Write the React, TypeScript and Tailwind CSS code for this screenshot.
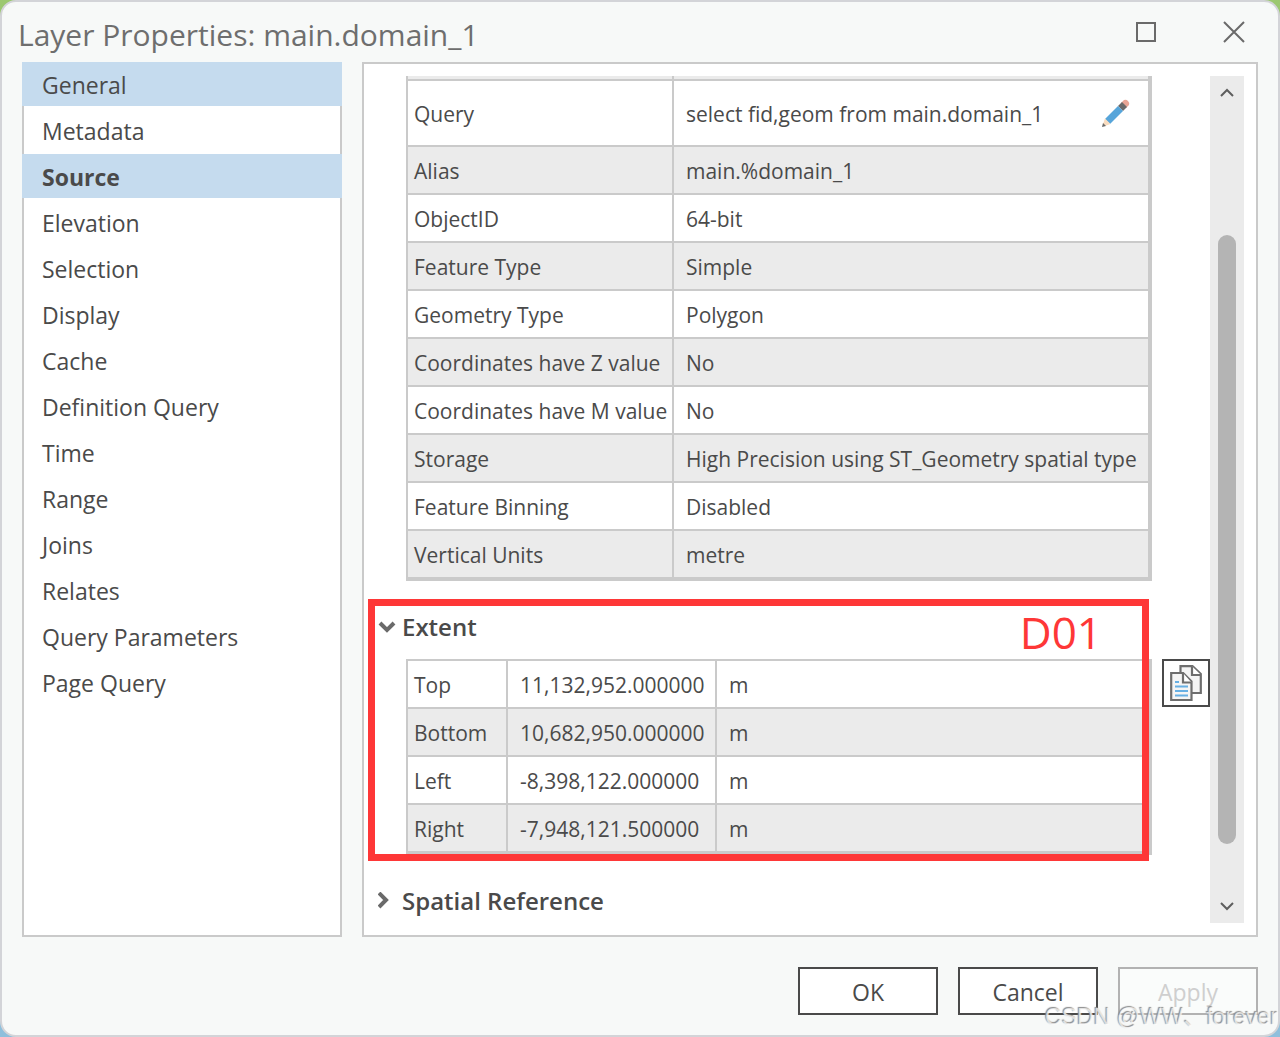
import { useState } from 'react';
import clsx from 'clsx';

const NAV_ITEMS = [
  'General',
  'Metadata',
  'Source',
  'Elevation',
  'Selection',
  'Display',
  'Cache',
  'Definition Query',
  'Time',
  'Range',
  'Joins',
  'Relates',
  'Query Parameters',
  'Page Query',
];

const SOURCE_ROWS = [
  { label: 'Alias', value: 'main.%domain_1' },
  { label: 'ObjectID', value: '64-bit' },
  { label: 'Feature Type', value: 'Simple' },
  { label: 'Geometry Type', value: 'Polygon' },
  { label: 'Coordinates have Z value', value: 'No' },
  { label: 'Coordinates have M value', value: 'No' },
  { label: 'Storage', value: 'High Precision using ST_Geometry spatial type' },
  { label: 'Feature Binning', value: 'Disabled' },
  { label: 'Vertical Units', value: 'metre' },
];

const EXTENT_ROWS = [
  { label: 'Top', value: '11,132,952.000000', unit: 'm' },
  { label: 'Bottom', value: '10,682,950.000000', unit: 'm' },
  { label: 'Left', value: '-8,398,122.000000', unit: 'm' },
  { label: 'Right', value: '-7,948,121.500000', unit: 'm' },
];

function PencilIcon() {
  return (
    <svg width="30" height="30" viewBox="0 0 30 30" aria-hidden="true">
      <path d="M21 4l3-3q2-1 4 1t1 4l-3 3z" fill="#e8a595" />
      <path d="M18 7l4-4 5 5-4 4z" fill="#6a6a6a" />
      <path d="M5 20L18 7l5 5L10 25z" fill="#57a5da" />
      <path d="M5 19.500l5.500 5.500-5.500 2-2-2z" fill="#f8dcc0" />
      <path d="M3 24l3 3-4 1z" fill="#6a6a6a" />
    </svg>
  );
}

function CopyIcon() {
  return (
    <svg width="32" height="36" viewBox="0 0 32 36" aria-hidden="true">
      <path d="M10.500 1.200h12L30.800 9v19H10.500z" fill="#f5f5f5" stroke="#6e6e6e" strokeWidth="2.200" />
      <path d="M22 1.200V10h9" fill="#fff" stroke="#6e6e6e" strokeWidth="2.200" />
      <path d="M1.200 8h12l8.300 8.500V35H1.200z" fill="#f5f5f5" stroke="#6e6e6e" strokeWidth="2.200" />
      <path d="M13 8v9.500h8.500" fill="#fff" stroke="#6e6e6e" strokeWidth="2.200" />
      <path d="M5 17h4M5 21.500h13M5 26h13M5 30.500h13" stroke="#67b0e4" strokeWidth="2.200" />
    </svg>
  );
}

function ChevronIcon({ open }: { open: boolean }) {
  return (
    <svg width="18" height="18" viewBox="0 0 18 18" fill="none" stroke="#6a6a6a" strokeWidth="4" aria-hidden="true">
      <path d={open ? 'M2 5l7 7 7-7' : 'M1 1l7 7-7 7'} />
    </svg>
  );
}

export default function App() {
  const [active, setActive] = useState('Source');
  const [extentOpen, setExtentOpen] = useState(true);
  const [referenceOpen, setReferenceOpen] = useState(false);

  return (
    <div className="relative flex min-h-screen bg-linear-to-b from-[#9cc870] to-[#8fbfdc] font-['Open_Sans','Noto_Sans',sans-serif] text-[#4a4a4a]">
      <div className="flex flex-1 flex-col rounded-2xl border-2 border-[#d3d4d8] bg-[#f7f9f8] px-5 pb-5">
        {/* Title bar */}
        <header className="flex h-15 items-start justify-between">
          <h1 className="-ml-1 pt-3 text-[30px] leading-[42px] text-[#6e6e6e]">Layer Properties: main.domain_1</h1>
          <div className="flex gap-16 pt-[18px] pr-3">
            <button aria-label="Maximize" className="size-6">
              <svg width="24" height="24" viewBox="0 0 24 24" fill="none" stroke="#6a6a6a" strokeWidth="2" aria-hidden="true">
                <path d="M3 3h18v18H3z" />
              </svg>
            </button>
            <button aria-label="Close" className="size-6">
              <svg width="24" height="24" viewBox="0 0 24 24" fill="none" stroke="#6a6a6a" strokeWidth="2" aria-hidden="true">
                <path d="M2 2l20 20M22 2L2 22" />
              </svg>
            </button>
          </div>
        </header>

        <div className="flex flex-1 gap-5">
          {/* Category list */}
          <nav className="w-80 shrink-0 border-2 border-[#cacaca] bg-white">
            <ul className="-mx-0.5 -mt-0.5">
              {NAV_ITEMS.map((item, idx) => (
                <li key={item} className="mb-0.5">
                  <button
                    onClick={() => setActive(item)}
                    className={clsx(
                      'block h-11 w-full px-5 pt-0.5 text-left text-[23px] leading-[42px]',
                      (item === active || idx === 0) && 'bg-[#c5dbee]',
                      item === active && 'font-bold'
                    )}
                  >
                    {item}
                  </button>
                </li>
              ))}
            </ul>
          </nav>

          {/* Details */}
          <main className="flex min-w-0 flex-1 border-2 border-[#cacaca] bg-white py-3 pr-3">
            <div className="min-w-0 flex-1">
              <div className="pr-[58px] pl-[42px]">
                <table className="w-full border-separate border-spacing-0 border-r-4 border-b-2 border-l-2 border-[#cacaca] text-[21px] leading-[44px]">
                  <tbody>
                    <tr className="h-[5px] bg-[#ebebeb]">
                      <td className="w-[266px] border-r-2 border-b-2 border-[#cacaca] p-0" />
                      <td className="border-b-2 border-[#cacaca] p-0" />
                    </tr>
                    <tr className="h-[66px]">
                      <th scope="row" className="border-r-2 border-b-2 border-[#cacaca] pt-0.5 pr-1 pb-0 pl-1.5 text-left font-normal">Query</th>
                      <td className="border-b-2 border-[#cacaca] pt-0.5 pr-[18px] pb-0 pl-3">
                        <div className="flex items-center justify-between">
                          select fid,geom from main.domain_1
                          <button aria-label="Edit query">
                            <PencilIcon />
                          </button>
                        </div>
                      </td>
                    </tr>
                    {SOURCE_ROWS.map(row => (
                      <tr key={row.label} className="odd:bg-[#ebebeb]">
                        <th scope="row" className="border-r-2 border-b-2 border-[#cacaca] pt-0.5 pr-1 pb-0 pl-1.5 text-left font-normal whitespace-nowrap">{row.label}</th>
                        <td className="border-b-2 border-[#cacaca] pt-0.5 pb-0 pl-3 whitespace-nowrap">{row.value}</td>
                      </tr>
                    ))}
                  </tbody>
                </table>
              </div>

              {/* Extent */}
              <section className="relative mt-[18px] h-[262px]">
                <h2>
                  <button onClick={() => setExtentOpen(!extentOpen)} className="flex h-[60px] items-center gap-1.5 pb-1 pl-3.5 text-[24px] font-semibold">
                    <ChevronIcon open={extentOpen} />
                    Extent
                  </button>
                </h2>
                {extentOpen && (
                  <div className="flex items-start gap-2.5 pl-[42px]">
                    <table className="flex-1 border-separate border-spacing-0 border-t-2 border-r-4 border-b-2 border-l-2 border-[#cacaca] text-[21px] leading-[44px]">
                      <tbody>
                        {EXTENT_ROWS.map(row => (
                          <tr key={row.label} className="even:bg-[#ebebeb]">
                            <th scope="row" className="w-[100px] border-r-2 border-b-2 border-[#cacaca] pt-0.5 pr-1 pb-0 pl-1.5 text-left font-normal">{row.label}</th>
                            <td className="w-[209px] border-r-2 border-b-2 border-[#cacaca] pt-0.5 pb-0 pl-3">{row.value}</td>
                            <td className="border-b-2 border-[#cacaca] pt-0.5 pb-0 pl-3">{row.unit}</td>
                          </tr>
                        ))}
                      </tbody>
                    </table>
                    <button aria-label="Copy extent" className="flex size-12 items-center justify-center border-2 border-[#4a4a4a] bg-white">
                      <CopyIcon />
                    </button>
                  </div>
                )}
                {/* Callout around the extent block */}
                <div className="pointer-events-none absolute inset-y-0 right-[61px] left-1 border-7 border-[#fe3737] pr-10 text-right text-[44px] leading-[52px] text-[#fe3737]">
                  D01
                </div>
              </section>

              {/* Spatial reference */}
              <section className="pt-[18px]">
                <h2>
                  <button onClick={() => setReferenceOpen(!referenceOpen)} className="flex h-11 items-center gap-1.5 pl-3.5 text-[24px] font-semibold">
                    <ChevronIcon open={referenceOpen} />
                    Spatial Reference
                  </button>
                </h2>
              </section>
            </div>

            {/* Scroll bar */}
            <div className="flex w-[34px] flex-col items-center justify-between bg-[#ebebeb] py-2">
              <button aria-label="Scroll up">
                <svg width="18" height="18" viewBox="0 0 18 18" fill="none" stroke="#5e5e5e" strokeWidth="2" aria-hidden="true">
                  <path d="M3 12l6-6 6 6" />
                </svg>
              </button>
              <div className="mt-[133px] mb-[53px] w-[18px] flex-1 rounded-full bg-[#b4b4b4]" />
              <button aria-label="Scroll down">
                <svg width="18" height="18" viewBox="0 0 18 18" fill="none" stroke="#5e5e5e" strokeWidth="2" aria-hidden="true">
                  <path d="M3 6l6 6 6-6" />
                </svg>
              </button>
            </div>
          </main>
        </div>

        {/* Dialog actions */}
        <footer className="flex justify-end gap-5 pt-[30px] text-[23px]">
          <button className="h-12 w-35 border-2 border-[#4a4a4a] bg-white pt-0.5">OK</button>
          <button className="h-12 w-35 border-2 border-[#4a4a4a] bg-white pt-0.5">Cancel</button>
          <button disabled className="h-12 w-35 border-2 border-[#b2b2b2] bg-[#fafcfb] pt-0.5 text-[#cfcfcf]">Apply</button>
        </footer>
      </div>

      <div className="pointer-events-none absolute right-0.5 bottom-1 font-['Liberation_Sans','Noto_Sans_CJK_SC',sans-serif] text-[23px] leading-8 text-white/70 [text-shadow:-1px_-1px_1px_#8a8a8a]">
        CSDN @WW、forever
      </div>
    </div>
  );
}
